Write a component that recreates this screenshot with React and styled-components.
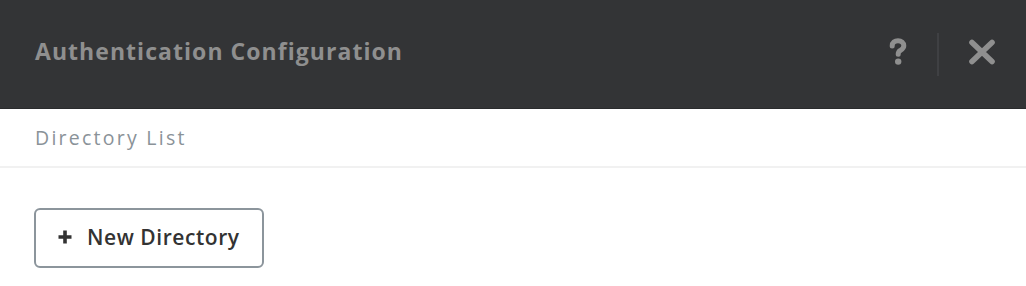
import styled, { createGlobalStyle } from 'styled-components';

const GlobalStyle = createGlobalStyle`
    html, body {
        margin: 0;
        padding: 0;
        background: #ffffff;
    }
    body {
        font-family: 'Open Sans', 'Liberation Sans', sans-serif;
    }
`

export default function App(){
    return <>
        <GlobalStyle/>
        <Modal>
            <Header>
                <Title>Authentication Configuration</Title>
                <Actions>
                    <IconButton aria-label="help">
                        <svg width="18" height="28" viewBox="0 0 18 28">
                            <path d="M3.2 8 C3.2 4.4 5.8 2.8 9 2.8 C12.4 2.8 14.8 4.8 14.8 7.8 C14.8 10.6 12.6 11.6 11 12.6 C9.8 13.4 9.2 14.2 9.2 16.2" fill="none" stroke="#8f8f8f" strokeWidth="5" strokeLinecap="round"/>
                            <circle cx="9.2" cy="23.6" r="3.2" fill="#8f8f8f"/>
                        </svg>
                    </IconButton>
                    <Divider/>
                    <IconButton aria-label="close">
                        <svg width="28" height="26" viewBox="0 0 28 26">
                            <path d="M4 3.5 L24 22.5 M24 3.5 L4 22.5" stroke="#8f8f8f" strokeWidth="5.6" strokeLinecap="round"/>
                        </svg>
                    </IconButton>
                </Actions>
            </Header>
            <SubHeader>Directory List</SubHeader>
            <Body>
                <NewButton>
                    <svg width="14" height="14" viewBox="0 0 14 14">
                        <path d="M7 0.5 V13.5 M0.5 7 H13.5" stroke="#333333" strokeWidth="3.6"/>
                    </svg>
                    New Directory
                </NewButton>
            </Body>
        </Modal>
    </>
}

const Modal = styled.div`
    width: 1026px;
    height: 286px;
    background: #ffffff;
    display: flex;
    flex-direction: column;
`

const Header = styled.div`
    height: 109px;
    background-color: #333436;
    border-bottom: 1px solid #2a2b2d;
    display: flex;
    align-items: center;
    justify-content: space-between;
    padding: 0 30px 0 35px;
    box-sizing: border-box;
    flex-shrink: 0;
`

const Title = styled.h1`
    margin: 0;
    font-family: 'Open Sans', 'Liberation Sans', sans-serif;
    font-weight: 700;
    font-size: 23px;
    letter-spacing: 1.05px;
    color: #8f8f8f;
    padding-bottom: 6px;
`

const Actions = styled.div`
    display: flex;
    align-items: center;
    height: 100%;
`

const IconButton = styled.div`
    display: flex;
    align-items: center;
    justify-content: center;
    cursor: pointer;
    padding-bottom: 4px;
`

const Divider = styled.div`
    width: 2px;
    height: 43px;
    background-color: #3f4043;
    margin: 0 29px 0 30px;
`

const SubHeader = styled.div`
    height: 59px;
    box-sizing: border-box;
    border-bottom: 2px solid #f1f1f1;
    display: flex;
    align-items: center;
    padding: 0 35px 0;
    font-family: 'Open Sans', 'Liberation Sans', sans-serif;
    font-size: 19.5px;
    letter-spacing: 2.25px;
    color: #8a9298;
    flex-shrink: 0;
`

const Body = styled.div`
    padding: 40px 35px 0 34px;
`

const NewButton = styled.button`
    display: flex;
    align-items: center;
    gap: 15px;
    width: 230px;
    height: 60px;
    box-sizing: border-box;
    padding: 0 0 2px 22px;
    border: 2px solid #8c959c;
    border-radius: 6px;
    background: #ffffff;
    font-family: 'Open Sans', 'Liberation Sans', sans-serif;
    font-weight: 600;
    font-size: 21px;
    letter-spacing: 0.55px;
    color: #333333;
    cursor: pointer;
`
